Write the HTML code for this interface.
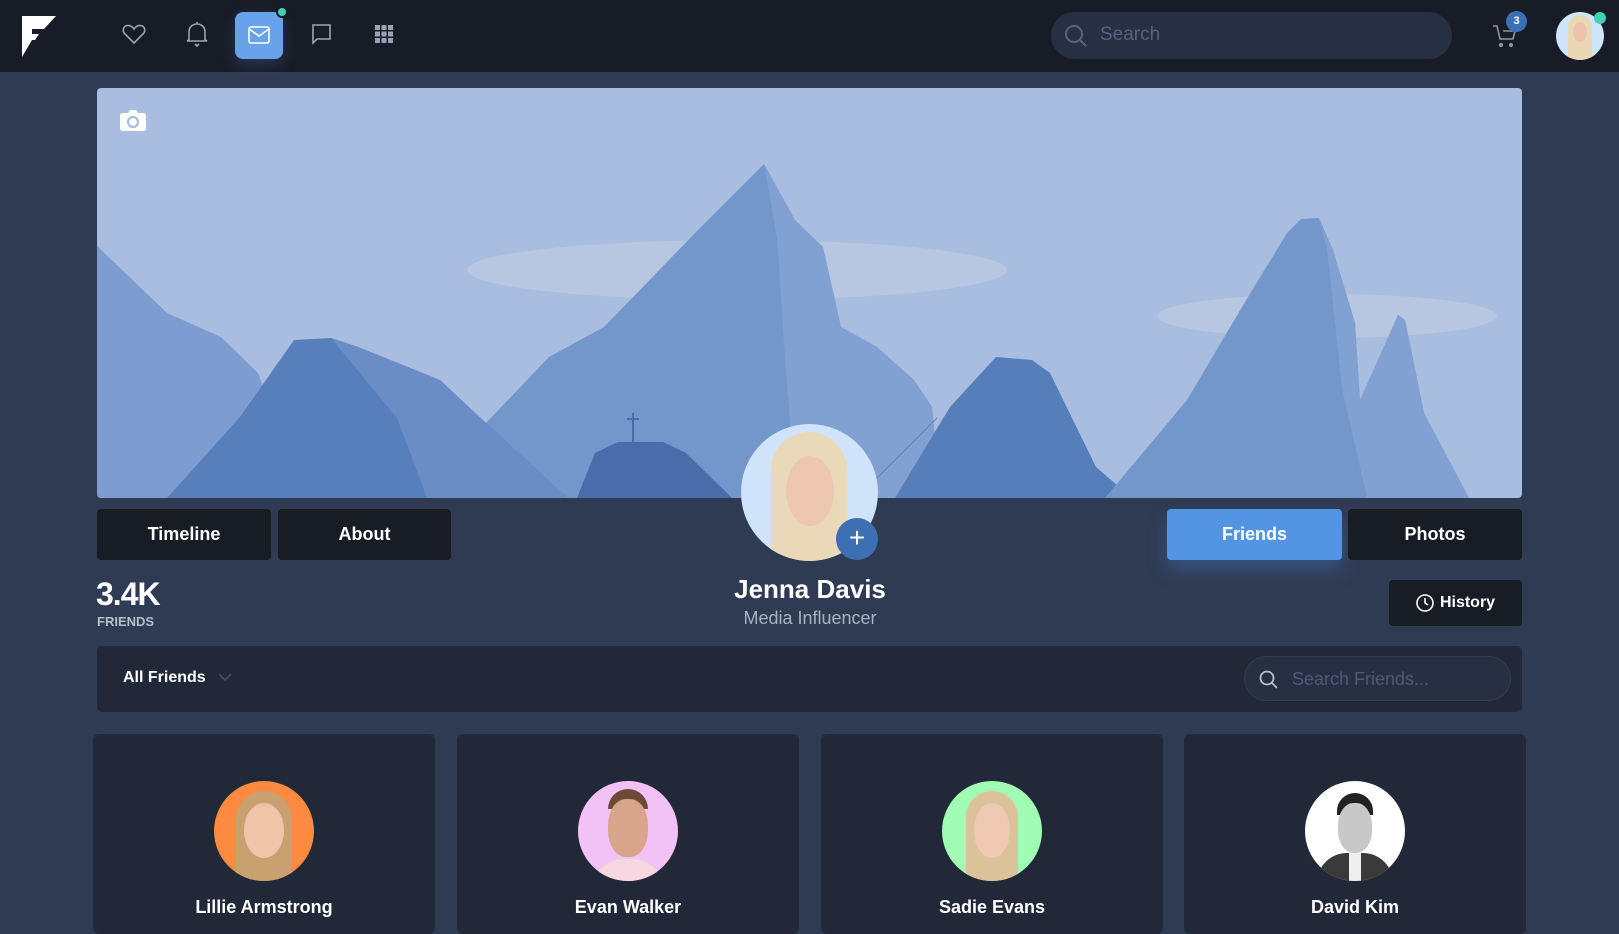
<!DOCTYPE html>
<html><head><meta charset="utf-8">
<style>
*{box-sizing:border-box;margin:0;padding:0}
html,body{width:1619px;height:903px;overflow:hidden;background:#2f3b52;font-family:"Liberation Sans",sans-serif;color:#fff}
.nav{position:absolute;left:0;top:0;width:1619px;height:72px;background:#181c26}
.abs{position:absolute}
.btn{position:absolute;background:#181c25;border-radius:4px;display:flex;align-items:center;justify-content:center;font-weight:bold;font-size:18px;color:#fff}
.card{position:absolute;top:734px;width:342px;height:200px;background:#212837;border-radius:6px}
.av{position:absolute;left:121px;top:47px;width:100px;height:100px;border-radius:50%;overflow:hidden}
.nm{position:absolute;top:163px;width:100%;text-align:center;font-weight:bold;font-size:18px}
</style></head><body>
<div class="nav">
  <svg class="abs" style="left:22px;top:16px" width="34" height="41" viewBox="0 0 34 41"><path d="M0 0H34L22 13H10V18H17L13 24H10L0 41Z" fill="#fff"/><path d="M10 13H22L17 18H10Z" fill="#181c26"/></svg>
  <svg class="abs" style="left:122px;top:23px" width="24" height="22" viewBox="0 0 24 22" fill="none" stroke="#9aa3b5" stroke-width="1.6"><path d="M12 20L3 11C0 8 1 3 5.5 2.5 8.5 2.2 11 4.5 12 6 13 4.5 15.5 2.2 18.5 2.5 23 3 24 8 21 11Z"/></svg>
  <svg class="abs" style="left:186px;top:21px" width="22" height="26" viewBox="0 0 22 26" fill="none" stroke="#9aa3b5" stroke-width="1.6"><path d="M3 19V11C3 6 6.5 3 11 3S19 6 19 11V19L21 20H1Z M11 1V3 M9 23L11 25 13 23"/></svg>
  <div class="abs" style="left:235px;top:12px;width:48px;height:47px;background:#67a2eb;border-radius:8px;box-shadow:0 6px 14px rgba(80,140,230,.25)"></div>
  <svg class="abs" style="left:248px;top:26px" width="22" height="18" viewBox="0 0 22 18" fill="none" stroke="#fff" stroke-width="1.6"><rect x="1" y="1" width="20" height="16" rx="2"/><path d="M1 3L11 10 21 3"/></svg>
  <div class="abs" style="left:276px;top:6px;width:12px;height:12px;border-radius:50%;background:#3fd3b5;border:2px solid #181c26"></div>
  <svg class="abs" style="left:311px;top:24px" width="21" height="21" viewBox="0 0 21 21" fill="none" stroke="#9aa3b5" stroke-width="1.6"><path d="M2 1H19V15H6L2 19Z"/></svg>
  <svg class="abs" style="left:375px;top:25px" width="18" height="18" viewBox="0 0 18 18" fill="#9aa3b5"><rect x="0" y="0" width="5" height="5"/><rect x="6.5" y="0" width="5" height="5"/><rect x="13" y="0" width="5" height="5"/><rect x="0" y="6.5" width="5" height="5"/><rect x="6.5" y="6.5" width="5" height="5"/><rect x="13" y="6.5" width="5" height="5"/><rect x="0" y="13" width="5" height="5"/><rect x="6.5" y="13" width="5" height="5"/><rect x="13" y="13" width="5" height="5"/></svg>
  <div class="abs" style="left:1051px;top:12px;width:401px;height:47px;background:#272f42;border-radius:24px"></div>
  <svg class="abs" style="left:1064px;top:24px" width="24" height="24" viewBox="0 0 24 24" fill="none" stroke="#56637e" stroke-width="2"><circle cx="10" cy="10" r="8"/><path d="M16 16L22 22"/></svg>
  <div class="abs" style="left:1100px;top:24px;font-size:19px;color:#56637e">Search</div>
  <svg class="abs" style="left:1492px;top:24px" width="26" height="24" viewBox="0 0 26 24" fill="none" stroke="#8c95a8" stroke-width="1.6"><path d="M1 2H5L8 15H21L23 7H11"/><circle cx="9" cy="21" r="1.3" fill="#8c95a8"/><circle cx="19" cy="21" r="1.3" fill="#8c95a8"/></svg>
  <div class="abs" style="left:1506px;top:11px;width:21px;height:21px;border-radius:50%;background:#3b6fb6;font-size:11px;font-weight:bold;text-align:center;line-height:21px">3</div>
  <div class="abs" style="left:1556px;top:12px;width:48px;height:48px;border-radius:50%;background:#cfe4fb;overflow:hidden">
    <div class="abs" style="left:12px;top:3px;width:24px;height:48px;border-radius:12px 12px 0 0;background:#ead7b3"></div>
    <div class="abs" style="left:17px;top:10px;width:14px;height:20px;border-radius:50%;background:#ecc3ad"></div>
  </div>
  <div class="abs" style="left:1594px;top:12px;width:12px;height:12px;border-radius:50%;background:#3fd3b5"></div>
</div>

<div class="abs" style="left:97px;top:88px;width:1425px;height:410px;border-radius:4px;overflow:hidden;background:#a9bde0">
<svg width="1425" height="410" viewBox="0 0 1425 410">
  <ellipse cx="640" cy="182" rx="270" ry="30" fill="#b7c7e1"/>
  <ellipse cx="1230" cy="228" rx="170" ry="22" fill="#b7c7e1"/>
  <polygon points="-3,155 70,225 124,249 161,285 206,410 -3,410" fill="#7d9dd1"/>
  <polygon points="389,335 452,269 507,239 543,202 598,145 634,109 667,76 698,132 726,159 744,239 780,259 817,292 835,319 844,410 380,410" fill="#7396cb"/>
  <polygon points="667,76 698,132 726,159 744,239 780,259 817,292 835,319 844,410 700,410 690,300 680,150" fill="#82a1d3"/>
  <polygon points="70,410 143,329 197,252 234,250 261,259 343,292 389,335 471,410" fill="#577fbb"/>
  <polygon points="234,250 261,259 343,292 389,335 471,410 330,410 300,330" fill="#6a8dc6"/>
  <polygon points="480,410 498,365 521,354 566,354 589,365 635,410" fill="#4a6cab"/>
  <rect x="535" y="325" width="2" height="30" fill="#4a6cab"/><rect x="530" y="330" width="12" height="2" fill="#4a6cab"/>
  <polygon points="798,410 853,319 899,269 935,272 953,285 999,379 1035,410" fill="#567ebb"/>
  <polygon points="1008,410 1090,312 1145,219 1190,145 1204,131 1222,130 1236,162 1258,235 1263,312 1281,272 1301,227 1308,232 1327,325 1372,410" fill="#7396cb"/>
  <polygon points="1222,130 1236,162 1258,235 1263,312 1281,272 1301,227 1308,232 1327,325 1372,410 1270,410 1245,300 1230,160" fill="#82a1d3"/>
  <path d="M760 410L840 330" stroke="#6a84b0" stroke-width="1"/>
</svg>
<svg class="abs" style="left:23px;top:21px" width="26" height="22" viewBox="0 0 26 22"><path d="M3 4H8L10 1H16L18 4H23Q26 4 26 7V19Q26 22 23 22H3Q0 22 0 19V7Q0 4 3 4Z" fill="#fff"/><circle cx="13" cy="13" r="5" fill="none" stroke="#a9bde0" stroke-width="2.2"/></svg>
</div>

<div class="btn" style="left:97px;top:509px;width:174px;height:51px">Timeline</div>
<div class="btn" style="left:278px;top:509px;width:173px;height:51px">About</div>
<div class="btn" style="left:1167px;top:509px;width:175px;height:51px;background:#5495e3;box-shadow:0 10px 18px rgba(70,130,220,.35)">Friends</div>
<div class="btn" style="left:1348px;top:509px;width:174px;height:51px">Photos</div>

<div class="abs" style="left:741px;top:424px;width:137px;height:137px;border-radius:50%;background:#cfe4fb;overflow:hidden">
  <div class="abs" style="left:30px;top:8px;width:76px;height:140px;border-radius:38px 38px 0 0;background:#ead9b8"></div>
  <div class="abs" style="left:45px;top:32px;width:48px;height:70px;border-radius:50%;background:#eec7b2"></div>
</div>
<div class="abs" style="left:836px;top:518px;width:42px;height:42px;border-radius:50%;background:#3d6fb3;font-size:28px;text-align:center;line-height:40px;font-weight:300">+</div>

<div class="abs" style="left:96px;top:576px;font-size:32px;font-weight:bold;letter-spacing:-1px">3.4K</div>
<div class="abs" style="left:97px;top:614px;font-size:13px;color:#b8bfcc;font-weight:bold">FRIENDS</div>
<div class="abs" style="left:610px;top:574px;width:400px;text-align:center;font-size:26px;font-weight:bold">Jenna Davis</div>
<div class="abs" style="left:610px;top:608px;width:400px;text-align:center;font-size:18px;color:#aab2c0">Media Influencer</div>
<div class="btn" style="left:1389px;top:580px;width:133px;height:46px;font-size:16px"><svg width="18" height="18" viewBox="0 0 18 18" fill="none" stroke="#fff" stroke-width="1.6" style="margin-right:6px"><circle cx="9" cy="9" r="8"/><path d="M9 4V9L12 11"/></svg>History</div>

<div class="abs" style="left:97px;top:646px;width:1425px;height:66px;background:#212837;border-radius:5px"></div>
<div class="abs" style="left:123px;top:669px;font-size:16px;font-weight:bold">All Friends</div>
<svg class="abs" style="left:218px;top:673px" width="14" height="9" viewBox="0 0 14 9" fill="none" stroke="#4a5368" stroke-width="1.5"><path d="M1 1L7 7 13 1"/></svg>
<div class="abs" style="left:1244px;top:656px;width:267px;height:45px;border-radius:23px;background:#272f42;border:1px solid #323c52"></div>
<svg class="abs" style="left:1259px;top:670px" width="20" height="20" viewBox="0 0 20 20" fill="none" stroke="#b8bfcc" stroke-width="1.8"><circle cx="8" cy="8" r="6.5"/><path d="M13 13L18 18"/></svg>
<div class="abs" style="left:1292px;top:669px;font-size:18px;color:#4d5a78">Search Friends...</div>

<div class="card" style="left:93px"><div class="av" style="background:#fb8a40"><div class="abs" style="left:22px;top:10px;width:56px;height:95px;border-radius:28px 28px 0 0;background:#c9a070"></div><div class="abs" style="left:30px;top:22px;width:40px;height:55px;border-radius:50%;background:#f0c4a8"></div></div><div class="nm">Lillie Armstrong</div></div>
<div class="card" style="left:457px"><div class="av" style="background:#f2c2f6"><div class="abs" style="left:30px;top:8px;width:40px;height:20px;border-radius:20px 20px 0 0;background:#6b4a38"></div><div class="abs" style="left:30px;top:18px;width:40px;height:58px;border-radius:45%;background:#d8a58a"></div><div class="abs" style="left:15px;top:78px;width:70px;height:30px;border-radius:30px 30px 0 0;background:#f7d7e0"></div></div><div class="nm">Evan Walker</div></div>
<div class="card" style="left:821px"><div class="av" style="background:#a2fdb4"><div class="abs" style="left:24px;top:10px;width:52px;height:95px;border-radius:26px 26px 0 0;background:#dcc29a"></div><div class="abs" style="left:32px;top:22px;width:36px;height:55px;border-radius:50%;background:#efc9b2"></div></div><div class="nm">Sadie Evans</div></div>
<div class="card" style="left:1184px"><div class="av" style="background:#fff"><div class="abs" style="left:32px;top:12px;width:36px;height:22px;border-radius:18px 18px 0 0;background:#222"></div><div class="abs" style="left:33px;top:22px;width:34px;height:50px;border-radius:45%;background:#c8c8c8"></div><div class="abs" style="left:12px;top:72px;width:76px;height:40px;border-radius:30px 30px 0 0;background:#3a3a3a"></div><div class="abs" style="left:44px;top:72px;width:12px;height:30px;background:#eee"></div></div><div class="nm">David Kim</div></div>
</body></html>
